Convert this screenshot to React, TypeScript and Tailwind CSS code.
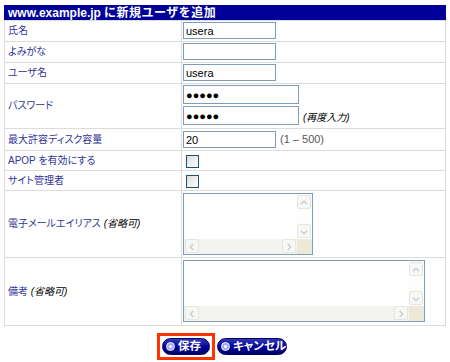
import type { ReactNode } from 'react'

const LABEL = "text-[10px] leading-none text-[#333399] [font-feature-settings:'palt']"
const NOTE  = "text-[10px] italic text-black [font-feature-settings:'palt']"
const INPUT = 'block border border-[#7f9db9] bg-white px-[2px] text-[11px] text-black outline-none'

function Row({ h, label, children }: { h: string; label: ReactNode; children: ReactNode }) {
  return (
    <div className={`grid grid-cols-[176px_263px] grid-rows-1 gap-px overflow-hidden ${h}`}>
      <div className="bg-white flex items-center pl-[3px] overflow-hidden">{label}</div>
      <div className="bg-white pl-px overflow-hidden">{children}</div>
    </div>
  )
}

function Arrow({ dir }: { dir: 'up' | 'down' | 'left' | 'right' }) {
  const d = {
    up:    'M3.5 8.5 L7 5 L10.5 8.5',
    down:  'M3.5 5.5 L7 9 L10.5 5.5',
    left:  'M8.5 3.5 L5 7 L8.5 10.5',
    right: 'M5.5 3.5 L9 7 L5.5 10.5',
  }[dir]
  return (
    <span className="w-[14px] h-[14px] rounded-[2px] border border-[#e6e6de] bg-[#f7f7f3] flex">
      <svg width="14" height="14" viewBox="0 0 14 14" fill="none">
        <path d={d} stroke="#c6ceda" strokeWidth="1.6" />
      </svg>
    </span>
  )
}

function Memo({ w }: { w: string }) {
  return (
    <div className={`mt-[2px] ${w} h-[62px] border border-[#7f9db9] bg-white flex flex-col`}>
      <div className="flex flex-1 min-h-0">
        <textarea className="flex-1 min-w-0 resize-none outline-none text-[11px]" />
        <div className="w-[15px] bg-[#fdfdfc] flex flex-col justify-between py-px">
          <Arrow dir="up" />
          <Arrow dir="down" />
        </div>
      </div>
      <div className="flex h-[15px]">
        <div className="flex-1 bg-[#f3f3ef] flex justify-between px-px">
          <Arrow dir="left" />
          <Arrow dir="right" />
        </div>
        <div className="w-[15px] bg-[#ece9d8]" />
      </div>
    </div>
  )
}

function Check() {
  return (
    <input
      type="checkbox"
      className="appearance-none block mt-[4px] ml-[3px] w-[13px] h-[13px] border border-[#1c5180] bg-linear-to-br from-[#dcdcd7] to-white"
    />
  )
}

function Pill({ w, children }: { w: string; children: ReactNode }) {
  return (
    <button
      type="button"
      className={`${w} h-[17px] rounded-full border border-[#000060] bg-linear-to-b from-[#3333b8] via-[#000099] to-[#000070] flex items-center pl-[3px] gap-[3px] text-white font-bold text-[11.5px] leading-none whitespace-nowrap [font-feature-settings:'palt']`}
    >
      <span className="shrink-0 w-[9px] h-[9px] rounded-full bg-[#9fa8ee] border border-[#e8ecff] flex items-center justify-center">
        <span className="w-[3px] h-[3px] rounded-full bg-white" />
      </span>
      {children}
    </button>
  )
}

export default function App() {
  return (
    <div className="w-[450px] h-[362px] bg-white pt-[5px] font-['Liberation_Sans','Noto_Sans_CJK_JP',sans-serif]">
      <div className="mx-[4px] w-[442px]">
        <div className="h-[15px] bg-[#000099] pl-[4px] flex items-center text-white font-bold leading-none">
          <span className="text-[12px]">www.example.jp</span>
          <span className="text-[12px] ml-[3px] tracking-[0.5px]">に新規ユーザを追加</span>
        </div>

        <div className="bg-[#dcdcdc] p-px flex flex-col gap-px">
          <Row h="h-[20px]" label={<span className={LABEL}>氏名</span>}>
            <input readOnly defaultValue="usera" className={`${INPUT} mt-px w-[93px] h-[17px]`} />
          </Row>
          <Row h="h-[20px]" label={<span className={LABEL}>よみがな</span>}>
            <input readOnly className={`${INPUT} mt-px w-[93px] h-[17px]`} />
          </Row>
          <Row h="h-[20px]" label={<span className={LABEL}>ユーザ名</span>}>
            <input readOnly defaultValue="usera" className={`${INPUT} mt-px w-[93px] h-[17px]`} />
          </Row>
          <Row h="h-[44px]" label={<span className={LABEL}>パスワード</span>}>
            <div className="flex flex-col gap-[2px] pt-px">
              <input readOnly defaultValue="●●●●●" className={`${INPUT} w-[116px] h-[19px] text-[10px]`} />
              <div className="flex items-end gap-[4px]">
                <input readOnly defaultValue="●●●●●" className={`${INPUT} w-[116px] h-[19px] text-[10px]`} />
                <span className={`${NOTE} pb-[2px] leading-none`}>(再度入力)</span>
              </div>
            </div>
          </Row>
          <Row h="h-[21px]" label={<span className={LABEL}>最大許容ディスク容量</span>}>
            <div className="flex items-center gap-[4px] mt-[2px]">
              <input readOnly defaultValue="20" className={`${INPUT} w-[93px] h-[17px]`} />
              <span className="text-[11px] leading-none text-[#555555]">(1 – 500)</span>
            </div>
          </Row>
          <Row h="h-[19px]" label={<span className={LABEL}>APOP を有効にする</span>}>
            <Check />
          </Row>
          <Row h="h-[19px]" label={<span className={LABEL}>サイト管理者</span>}>
            <Check />
          </Row>
          <Row
            h="h-[66px]"
            label={<span className={LABEL}>電子メールエイリアス <i className={NOTE}>(省略可)</i></span>}
          >
            <Memo w="w-[130px]" />
          </Row>
          <Row
            h="h-[67px]"
            label={<span className={LABEL}>備考 <i className={NOTE}>(省略可)</i></span>}
          >
            <Memo w="w-[242px]" />
          </Row>
        </div>
      </div>

      <div className="mt-[7px] mr-[6px] flex justify-center items-center gap-[2px]">
        <div className="border-[3px] border-[#ff3300] p-[2px]">
          <Pill w="w-[48px]">保存</Pill>
        </div>
        <Pill w="w-[70px]">キャンセル</Pill>
      </div>
    </div>
  )
}
